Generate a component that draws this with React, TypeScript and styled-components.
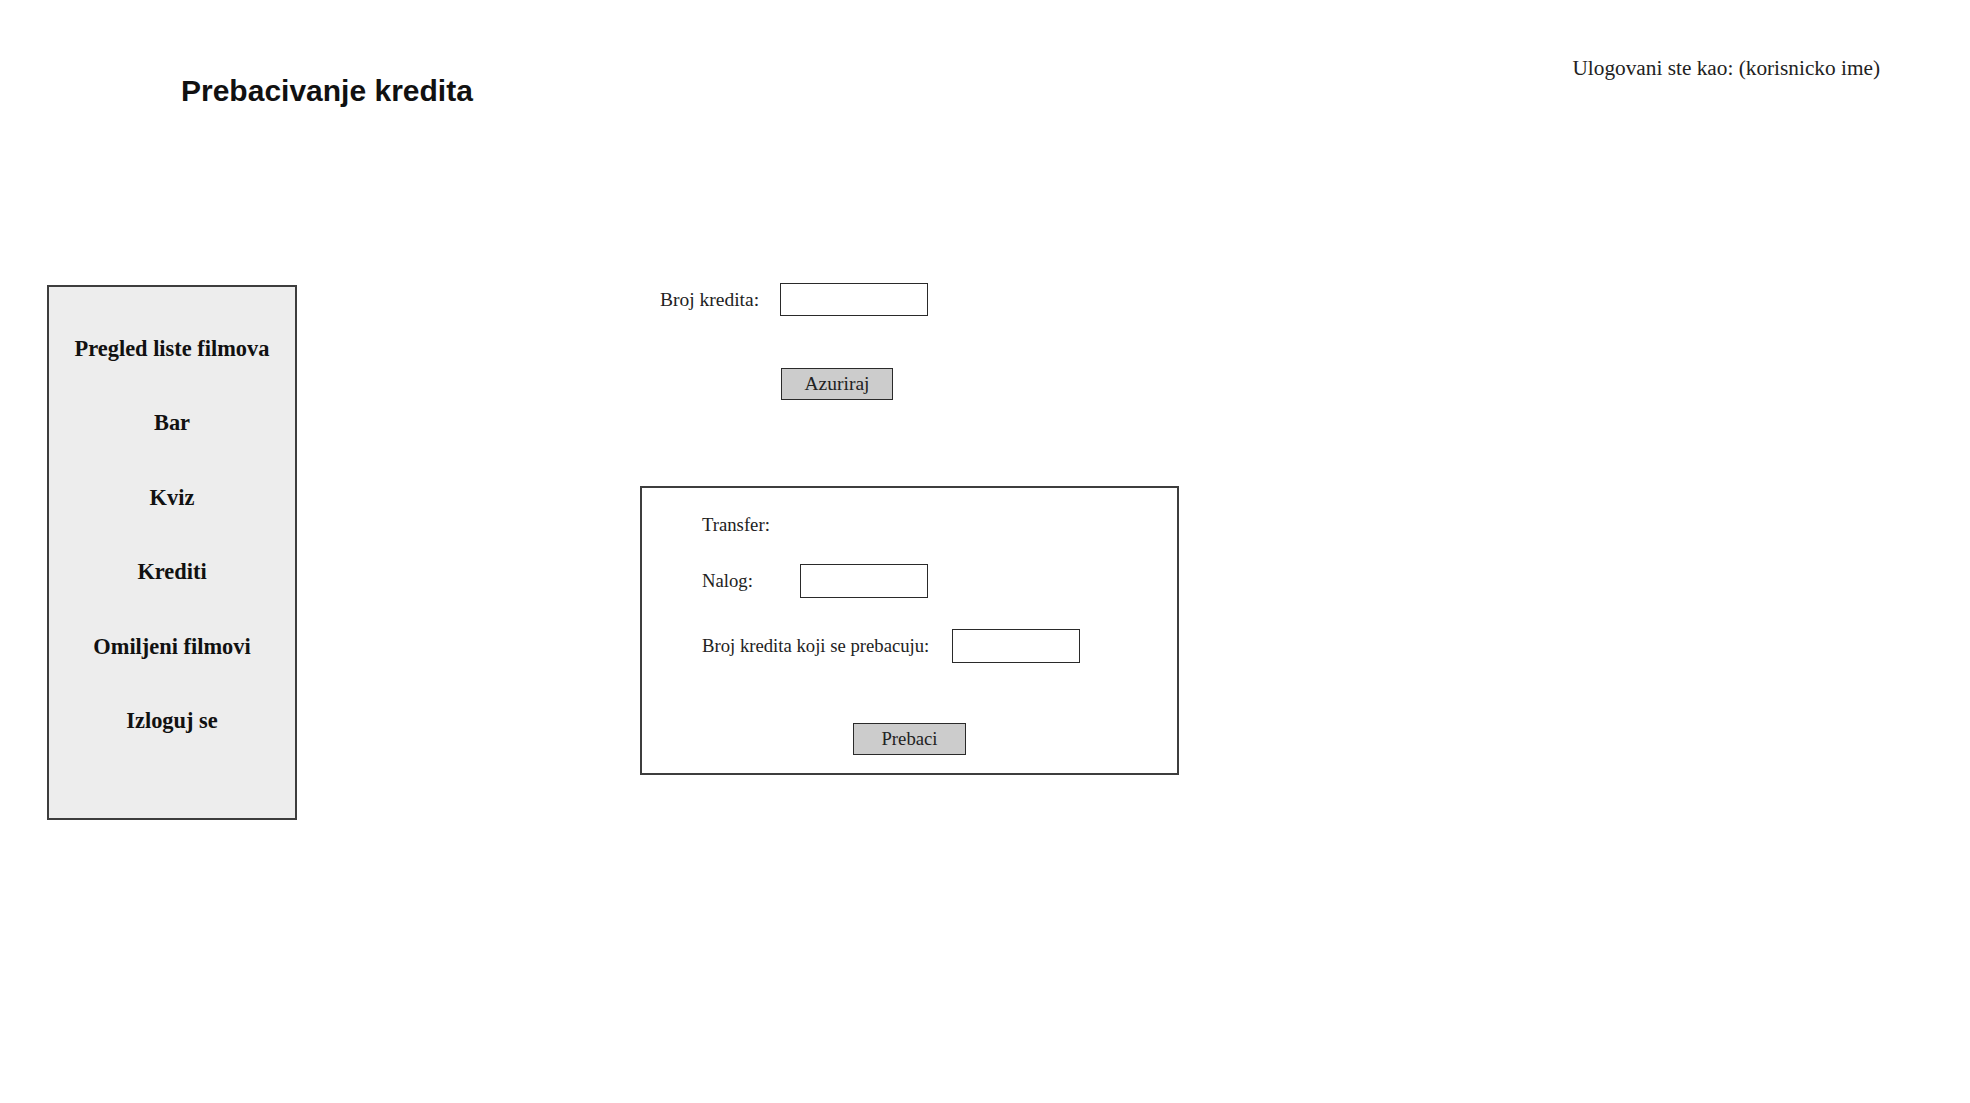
import styled, { createGlobalStyle } from "styled-components";

const GlobalStyle = createGlobalStyle`
  html, body {
    margin: 0;
    padding: 0;
    background: #ffffff;
  }
  body {
    font-family: "Liberation Serif", "Times New Roman", serif;
    color: #222;
  }
  * {
    box-sizing: border-box;
  }
`;

const navItems = [
  "Pregled liste filmova",
  "Bar",
  "Kviz",
  "Krediti",
  "Omiljeni filmovi",
  "Izloguj se",
];

export default function App() {
  return (
    <>
      <GlobalStyle />
      <Page>
        <Header>
          <Title>Prebacivanje kredita</Title>
          <UserInfo>Ulogovani ste kao: (korisnicko ime)</UserInfo>
        </Header>

        <Body>
          <Sidebar>
            {navItems.map((item) => (
              <NavItem key={item}>{item}</NavItem>
            ))}
          </Sidebar>

          <Main>
            <FieldRow $indent={20}>
              <Label $size={19.5}>Broj kredita:</Label>
              <TextInput $width={148} $height={33} />
            </FieldRow>

            <ButtonRow $indent={141} $top={52}>
              <Button $width={112} $size={19.5}>
                Azuriraj
              </Button>
            </ButtonRow>

            <TransferBox>
              <Label $size={18.7}>Transfer:</Label>
              <FieldRow $top={28}>
                <Label $size={18.7} $width={77}>
                  Nalog:
                </Label>
                <TextInput $width={128} $height={34} />
              </FieldRow>
              <FieldRow $top={31} $gap={23}>
                <Label $size={18.7}>Broj kredita koji se prebacuju:</Label>
                <TextInput $width={128} $height={34} />
              </FieldRow>
              <ButtonRow $center $top={60}>
                <Button $width={113} $size={18.7}>
                  Prebaci
                </Button>
              </ButtonRow>
            </TransferBox>
          </Main>
        </Body>
      </Page>
    </>
  );
}

const Page = styled.div`
  width: 1970px;
  min-height: 1103px;
  display: flex;
  flex-direction: column;
`;

const Header = styled.header`
  display: flex;
  justify-content: space-between;
  align-items: flex-start;
  padding: 56px 90px 0 181px;
`;

const Title = styled.h1`
  margin: 18px 0 0;
  font-family: "Liberation Sans", Arial, sans-serif;
  font-weight: 700;
  font-size: 30px;
  line-height: 34px;
  color: #111;
`;

const UserInfo = styled.div`
  font-size: 21.3px;
  color: #222;
`;

const Body = styled.div`
  display: flex;
  align-items: flex-start;
  gap: 343px;
  padding: 175px 0 0 47px;
`;

const Sidebar = styled.nav`
  width: 250px;
  height: 535px;
  margin-top: 2px;
  padding-top: 25px;
  background: #ededed;
  border: 2px solid #3d3d3d;
  display: flex;
  flex-direction: column;
`;

const NavItem = styled.div`
  text-align: center;
  font-weight: 700;
  font-size: 22.4px;
  line-height: 74.4px;
  color: #111;
  cursor: pointer;
`;

const Main = styled.div`
  display: flex;
  flex-direction: column;
  align-items: flex-start;
`;

const FieldRow = styled.div<{ $indent?: number; $top?: number; $gap?: number }>`
  display: flex;
  align-items: center;
  gap: ${(p) => p.$gap ?? 21}px;
  padding-left: ${(p) => p.$indent ?? 0}px;
  margin-top: ${(p) => p.$top ?? 0}px;
`;

const Label = styled.span<{ $size: number; $width?: number }>`
  font-size: ${(p) => p.$size}px;
  color: #222;
  white-space: nowrap;
  ${(p) => (p.$width ? `min-width: ${p.$width}px;` : "")}
`;

const TextInput = styled.input<{ $width: number; $height: number }>`
  width: ${(p) => p.$width}px;
  height: ${(p) => p.$height}px;
  margin: 0;
  padding: 0 6px;
  border: 1.5px solid #2a2a2a;
  border-radius: 0;
  background: #fff;
  font-family: inherit;
  font-size: 17px;
  outline: none;
`;

const ButtonRow = styled.div<{ $indent?: number; $top?: number; $center?: boolean }>`
  display: flex;
  justify-content: ${(p) => (p.$center ? "center" : "flex-start")};
  align-self: stretch;
  padding-left: ${(p) => p.$indent ?? 0}px;
  margin-top: ${(p) => p.$top ?? 0}px;
`;

const Button = styled.button<{ $width: number; $size: number }>`
  width: ${(p) => p.$width}px;
  height: 32px;
  margin: 0;
  padding: 0;
  background: #cccccc;
  border: 1.5px solid #2a2a2a;
  border-radius: 0;
  font-family: "Liberation Serif", "Times New Roman", serif;
  font-size: ${(p) => p.$size}px;
  color: #222;
  cursor: pointer;
`;

const TransferBox = styled.section`
  width: 539px;
  height: 289px;
  margin-top: 86px;
  padding: 26px 0 0 60px;
  border: 2px solid #3d3d3d;
  display: flex;
  flex-direction: column;
  align-items: flex-start;

  & > ${ButtonRow} {
    margin-left: -60px;
  }
`;
